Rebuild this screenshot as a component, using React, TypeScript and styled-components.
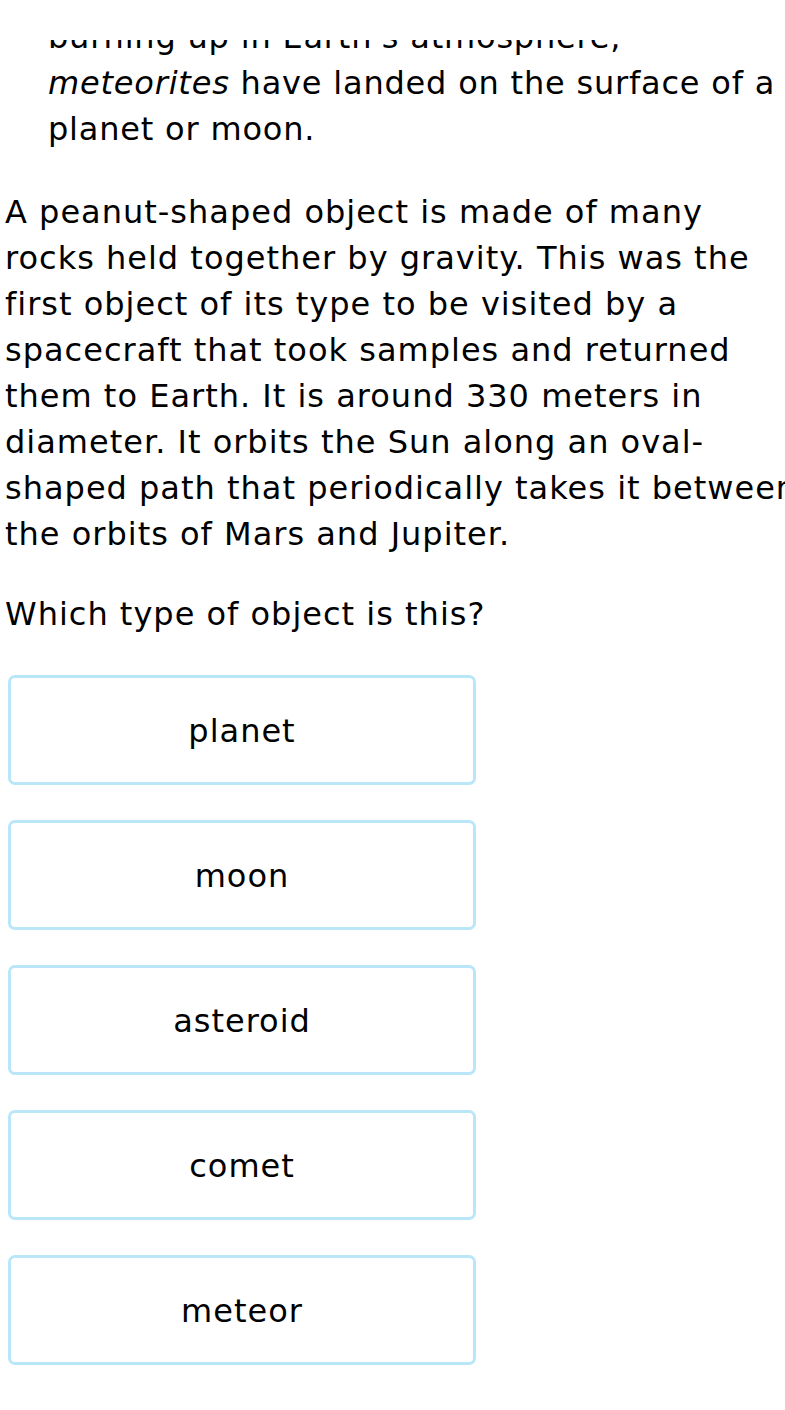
import * as React from "react";
import styled, { createGlobalStyle } from "styled-components";

const choices = ["planet", "moon", "asteroid", "comet", "meteor"];

// line breaks follow the reference so the wrapping matches
const passage = [
  "A peanut-shaped object is made of many",
  "rocks held together by gravity. This was the",
  "first object of its type to be visited by a",
  "spacecraft that took samples and returned",
  "them to Earth. It is around 330 meters in",
  "diameter. It orbits the Sun along an oval-",
  "shaped path that periodically takes it between",
  "the orbits of Mars and Jupiter.",
];

const App: React.FC = () => {
  return (
    <>
      <GlobalStyle />
      <Page>
        <TopBand />
        <Viewport>
          <Content>
            <Aside>
              <Line>burning up in Earth's atmosphere,</Line>
              <Line>
                <em>meteorites</em> have landed on the surface of a
              </Line>
              <Line>planet or moon.</Line>
            </Aside>
            <Passage>
              {passage.map((l, i) => (
                <Line key={i}>{l}</Line>
              ))}
            </Passage>
            <Question>Which type of object is this?</Question>
            <Choices>
              {choices.map((c) => (
                <Choice key={c}>{c}</Choice>
              ))}
            </Choices>
          </Content>
        </Viewport>
      </Page>
    </>
  );
};

const GlobalStyle = createGlobalStyle`
  html, body {
    margin: 0;
    padding: 0;
    background: #fff;
    overflow-x: hidden;
  }
  body {
    font-family: "DejaVu Sans", Verdana, sans-serif;
    color: #000;
  }
`;

const Page = styled.div`
  width: 785px;
  height: 1410px;
  overflow: hidden;
  display: flex;
  flex-direction: column;
`;

const TopBand = styled.div`
  height: 40px;
  flex: none;
  background: #fff;
`;

const Viewport = styled.div`
  flex: 1;
  overflow: hidden;
`;

const Content = styled.div`
  width: 810px;
  margin-top: -26px;
  font-size: 32px;
  line-height: 46px;
  letter-spacing: 1px;
`;

const Line = styled.span`
  display: block;
  white-space: nowrap;
`;

const Aside = styled.p`
  margin: 0 0 37px;
  padding-left: 48px;
  letter-spacing: 0.8px;
`;

const Passage = styled.p`
  margin: 0 0 34px;
  padding-left: 5px;
`;

const Question = styled.p`
  margin: 0 0 38px;
  padding-left: 5px;
`;

const Choices = styled.div`
  display: flex;
  flex-direction: column;
  gap: 35px;
  padding-left: 8px;
`;

const Choice = styled.div`
  width: 468px;
  height: 110px;
  box-sizing: border-box;
  border: 3px solid #b9e6f8;
  border-radius: 7px;
  display: flex;
  align-items: center;
  justify-content: center;
  font-size: 32px;
  padding-top: 2px;
`;

export default App;
